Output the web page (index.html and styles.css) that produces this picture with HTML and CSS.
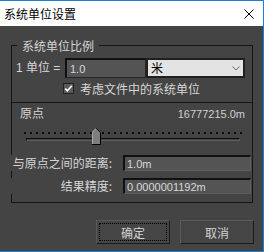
FILE: index.html
```html
<!DOCTYPE html>
<html lang="zh">
<head>
<meta charset="utf-8">
<title>系统单位设置</title>
<link rel="stylesheet" href="styles.css">
</head>
<body>
<div class="win">
  <div class="titlebar">
    <span class="title">系统单位设置</span>
    <svg class="close" width="10" height="10" viewBox="0 0 10 10"><path d="M0.5 0.5L9.5 9.5M9.5 0.5L0.5 9.5" stroke="#000" stroke-width="1" fill="none"/></svg>
  </div>
  <div class="body">
    <fieldset class="group">
      <legend class="legend">系统单位比例</legend>
      <div class="scale-sec">
        <div class="row1">
          <span class="lbl1">1 单位 =</span>
          <div class="inp inp-scale">1.0</div>
          <div class="select"><span class="sel-text">米</span><svg class="chev" width="8" height="5" viewBox="0 0 8 5"><path d="M0.5 0.5L4 4L7.5 0.5" stroke="#6a6a6a" stroke-width="1" fill="none"/></svg></div>
        </div>
        <div class="row2">
          <span class="cb"><svg width="9" height="9" viewBox="0 0 9 9"><path d="M1.2 4.6L3.4 6.8L7.8 1.8" stroke="#fff" stroke-width="1.7" fill="none"/></svg></span>
          <span class="cb-lbl">考虑文件中的系统单位</span>
        </div>
      </div>
      <div class="origin-sec">
        <div class="origin-head"><span class="oh-lbl">原点</span><span class="num">16777215.0m</span></div>
        <div class="slider">
          <div class="ticks"></div>
          <div class="track"></div>
          <svg class="thumb" width="9" height="17" viewBox="0 0 9 17">
            <polygon points="0,4 4,0 8,4 8,16 0,16" fill="#7d7d7d"/>
            <path d="M0.5 16V4.2L4.2 0.5" stroke="#a8a8a8" stroke-width="1" fill="none"/>
            <path d="M4.2 0.3L8.5 4.6V16.5H0" stroke="#000" stroke-width="1" fill="none"/>
          </svg>
        </div>
        <div class="frow"><span class="flbl">与原点之间的距离:</span><div class="inp wide">1.0m</div></div>
        <div class="frow second"><span class="flbl">结果精度:</span><div class="inp wide">0.0000001192m</div></div>
      </div>
    </fieldset>
    <div class="buttons">
      <button class="btn focus">确定</button>
      <button class="btn">取消</button>
    </div>
  </div>
</div>
</body>
</html>
```
FILE: styles.css
```css
html, body {
  margin: 0;
  padding: 0;
  background: #444444;
}
.win {
  width: 264px;
  height: 252px;
  box-sizing: border-box;
  border-top: 1px solid #1c7fd6;
  border-right: 1px solid #1c7fd6;
  border-bottom: 1px solid #1c7fd6;
  background: #444444;
  display: flex;
  flex-direction: column;
  font-family: "Noto Sans CJK SC", sans-serif;
  font-size: 12px;
  color: #d6d6d6;
}
.titlebar {
  height: 25px;
  flex: none;
  background: #ffffff;
  display: flex;
  align-items: center;
  padding-left: 4px;
}
.title {
  color: #000;
  font-size: 12px;
  line-height: 14px;
}
.close {
  margin-left: auto;
  margin-right: 9px;
  display: block;
}
.body {
  flex: 1;
}
.group {
  margin: 12px 0 0 11px;
  padding: 0;
  width: 242px;
  box-sizing: border-box;
  border: 1px solid #151515;
  min-inline-size: 0;
}
.legend {
  margin-left: 5px;
  padding: 0 5px;
  font-size: 12px;
  line-height: 15px;
  color: #d6d6d6;
}
.scale-sec {
  height: 49px;
  box-sizing: border-box;
  padding-top: 5px;
}
.row1 {
  display: flex;
  align-items: center;
  height: 20px;
}
.lbl1 {
  font-family: "Liberation Sans", "Noto Sans CJK SC", sans-serif;
  margin-left: 4px;
  width: 49px;
  line-height: 14px;
}
.inp {
  box-sizing: border-box;
  background: #545454;
  border-top: 2px solid #111;
  border-left: 2px solid #111;
  border-bottom: 1px solid #262626;
  border-right: 1px solid #262626;
  font-family: "Liberation Sans", sans-serif;
  font-size: 11px;
  color: #d8d8d8;
  display: flex;
  align-items: center;
}
.inp-scale {
  width: 81px;
  height: 20px;
  padding-left: 3px;
}
.select {
  box-sizing: border-box;
  width: 99px;
  height: 20px;
  background: #e3e3e3;
  border: 2px solid #202020;
  display: flex;
  align-items: center;
  color: #000;
  padding-left: 3px;
}
.sel-text {
  line-height: 14px;
}
.chev {
  margin-left: auto;
  margin-right: 3px;
  display: block;
}
.row2 {
  display: flex;
  align-items: center;
  margin-top: 5px;
  margin-left: 51px;
  height: 11px;
}
.cb {
  box-sizing: border-box;
  width: 11px;
  height: 11px;
  background: #5a5a5a;
  border: 1px solid #222;
  display: flex;
  align-items: center;
  justify-content: center;
}
.cb svg { display: block; }
.cb-lbl {
  margin-left: 6px;
  line-height: 14px;
}
.origin-sec {
  border-top: 1px solid #151515;
  padding-bottom: 8px;
}
.origin-head {
  display: flex;
  align-items: baseline;
  justify-content: space-between;
  padding: 3px 7px 0 8px;
  line-height: 14px;
}
.num {
  font-family: "Liberation Sans", sans-serif;
  font-size: 11px;
  color: #cfcfcf;
}
.slider {
  position: relative;
  height: 22px;
  box-sizing: border-box;
  margin-top: 4px;
  padding-top: 7px;
}
.ticks {
  margin-left: 12px;
  width: 218px;
  height: 2px;
  background: repeating-linear-gradient(90deg, #0c0c0c 0 2px, transparent 2px 6px);
}
.track {
  margin-top: 4px;
  margin-left: 14px;
  width: 214px;
  height: 3px;
  box-sizing: border-box;
  border-top: 1px solid #0c0c0c;
  border-left: 1px solid #0c0c0c;
  border-bottom: 1px solid #5e5e5e;
  border-right: 1px solid #5e5e5e;
}
.thumb {
  position: absolute;
  left: 80px;
  top: 3px;
  display: block;
}
.frow {
  display: flex;
  align-items: center;
  margin-top: 8px;
  height: 16px;
}
.frow.second {
  margin-top: 7px;
}
.flbl {
  width: 101px;
  margin-left: -1px;
  text-align: right;
  background: #444444;
  line-height: 16px;
}
.wide {
  margin-left: 11px;
  width: 128px;
  height: 16px;
  padding-left: 2px;
  border-bottom-color: #5e5e5e;
  border-right-color: #5e5e5e;
}
.buttons {
  display: flex;
  gap: 10px;
  margin: 17px 0 0 96px;
}
.btn {
  width: 74px;
  height: 24px;
  box-sizing: border-box;
  padding: 0;
  background: #454545;
  border-top: 1px solid #5a5a5a;
  border-left: 1px solid #5a5a5a;
  border-bottom: 1px solid #1b1b1b;
  border-right: 1px solid #1b1b1b;
  font-family: "Noto Sans CJK SC", sans-serif;
  font-size: 12px;
  color: #d2d2d2;
}
.btn.focus {
  outline: 1px dotted #000;
  outline-offset: -4px;
}
```
